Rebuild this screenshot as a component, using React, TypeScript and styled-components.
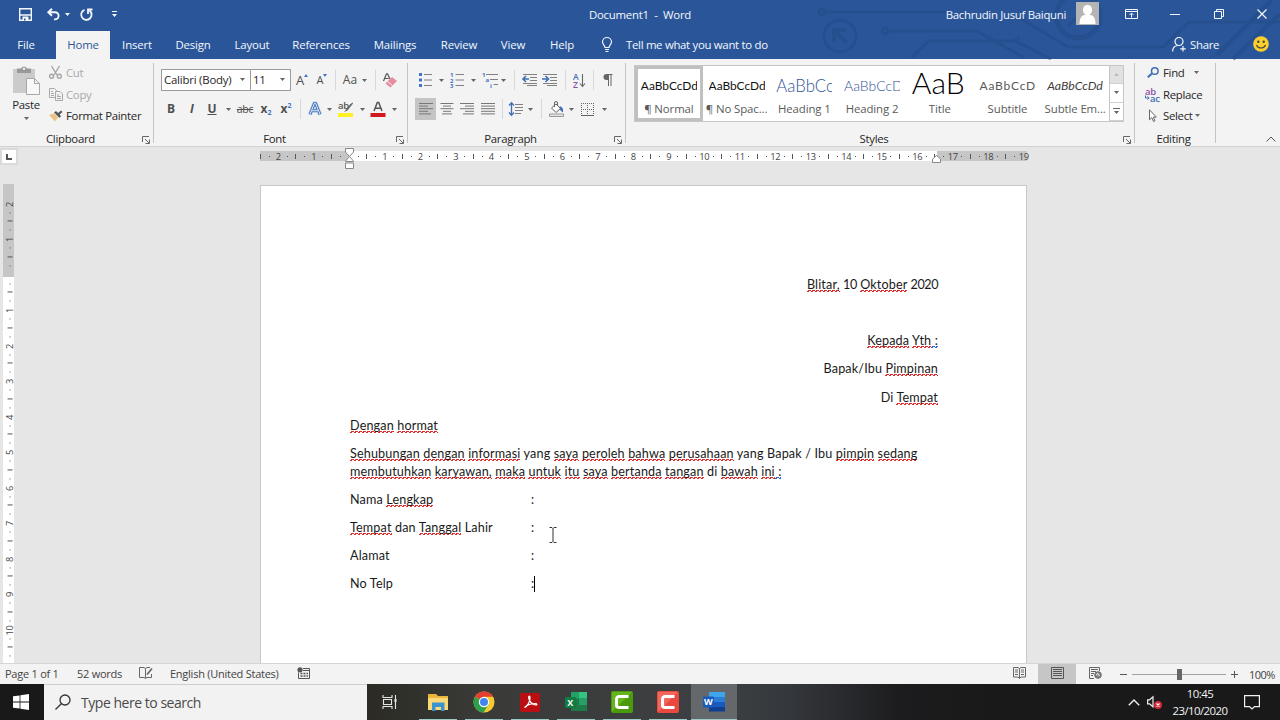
import React from 'react';
import styled, {createGlobalStyle, css} from 'styled-components';

const GlobalStyle = createGlobalStyle`
  * {
    box-sizing: border-box;
  }

  body {
    margin: 0;
    overflow: hidden;
  }

  svg {
    display: block;
    flex: none;
    overflow: visible;
  }
`;

const StyledApp = styled.main`
  display: flex;
  flex-direction: column;
  width: 1280px;
  height: 720px;
  overflow: hidden;
  background-color: #e6e6e6;
  color: #262626;
  font-family: "Open Sans", "Noto Sans", sans-serif;
  font-size: 11.4px;
  letter-spacing: -0.3px;
  white-space: pre;
`;

// Blue header

const Header = styled.header`
  position: relative;
  height: 59px;
  flex: none;
  background-color: #2a5699;
  color: #f4f7fc;
`;

const Circuit = styled.svg`
  position: absolute;
  top: 0;
  right: 0;
  opacity: 0.6;
`;

const TitleBar = styled.div`
  position: relative;
  display: grid;
  grid-template-columns: 1fr auto 1fr;
  align-items: center;
  height: 28px;
`;

const Slots = styled.div`
  display: flex;
  align-items: center;
`;

const Slot = styled.div<{ $w: number }>`
  display: flex;
  align-items: center;
  justify-content: center;
  flex: none;
  width: ${props => props.$w}px;
`;

const WindowTitle = styled.div`
  letter-spacing: -0.25px;
`;

const WindowControls = styled.div`
  display: flex;
  align-items: center;
  justify-content: flex-end;
`;

const UserName = styled.span`
  margin-right: 10px;
`;

const Avatar = styled.div`
  width: 23px;
  height: 23px;
  margin: -2px 8px 0 0;
  background-color: #b4b4b4;
`;

const TabRow = styled.nav`
  position: relative;
  display: flex;
  align-items: stretch;
  height: 31px;
  padding-top: 3px;
`;

const Tab = styled.div<{ $w: number; $active?: boolean }>`
  display: flex;
  align-items: center;
  justify-content: center;
  width: ${props => props.$w}px;
  padding-bottom: 1px;
  background-color: ${props => props.$active ? '#f3f3f3' : 'transparent'};
  color: ${props => props.$active ? '#2b579a' : '#f4f7fc'};
  letter-spacing: -0.15px;
`;

const FileTab = styled(Tab)`
  padding-right: 4px;
  padding-bottom: 2px;
`;

const TellMe = styled.div`
  display: flex;
  align-items: center;
  gap: 13px;
  margin-left: 15px;
  padding-bottom: 1px;
`;

const ShareArea = styled.div`
  display: flex;
  align-items: center;
  gap: 4px;
  margin-left: auto;
  padding: 0 11px 2px 0;
`;

const ShareText = styled.span`
  width: 28px;
  margin-right: 31px;
`;

// Ribbon

const Ribbon = styled.section`
  display: flex;
  flex: none;
  height: 88px;
  padding-top: 4px;
  background-color: #f3f3f3;
  border-bottom: 1px solid #d2d2d2;
`;

const Group = styled.div<{ $w: number }>`
  display: flex;
  flex-direction: column;
  flex: none;
  width: ${props => props.$w}px;
  height: 80px;
  border-right: 1px solid #c4c4c4;
`;

const GroupBody = styled.div`
  height: 66px;
  flex: none;
`;

const GroupFooter = styled.div`
  display: grid;
  grid-template-columns: 1fr auto;
  align-items: center;
  flex: none;
  height: 14px;
  margin-top: 2px;
  padding: 1px 3px 0 0;
  line-height: 14px;
  text-align: center;
`;

const ClipboardBody = styled(GroupBody)`
  display: flex;
`;

const PasteButton = styled.div`
  display: flex;
  flex-direction: column;
  align-items: center;
  width: 48px;
  padding: 3px 0 0 4px;
`;

const PasteLabel = styled.span`
  margin: 2px 0 5px;
  line-height: 15px;
`;

const CommandList = styled.div`
  display: flex;
  flex-direction: column;
  margin-top: -1px;
`;

const Command = styled.div<{ $disabled?: boolean }>`
  display: flex;
  align-items: center;
  gap: 3px;
  height: 21.5px;
  color: ${props => props.$disabled ? '#a9a9a9' : '#262626'};
`;

const CommandIcon = styled.div`
  display: flex;
  justify-content: center;
  width: 15px;
`;

const ToolRow = styled.div<{ $first?: boolean }>`
  display: flex;
  align-items: center;
  height: 22px;
  margin-top: ${props => props.$first ? 6 : 7}px;
  padding-left: 7px;
`;

const Combo = styled.div<{ $w: number }>`
  display: flex;
  align-items: center;
  justify-content: space-between;
  flex: none;
  width: ${props => props.$w}px;
  height: 22px;
  margin-right: -1px;
  padding: 0 5px 1px 2px;
  background-color: #fff;
  border: 1px solid #9c9c9c;
  letter-spacing: -0.2px;
`;

const Glyph = styled.span<{ $size?: number; $color?: string; $bold?: boolean; $italic?: boolean }>`
  color: ${props => props.$color || '#505050'};
  font-size: ${props => props.$size || 12}px;
  font-weight: ${props => props.$bold ? 700 : 400};
  font-style: ${props => props.$italic ? 'italic' : 'normal'};
  letter-spacing: 0;
  line-height: 16px;
`;

const Underlined = styled(Glyph)`
  text-decoration: underline;
`;

const Struck = styled(Glyph)`
  text-decoration: line-through;
  letter-spacing: -0.3px;
`;

const Small = styled.span<{ $up?: boolean }>`
  color: #4472c4;
  font-size: 7px;
  vertical-align: ${props => props.$up ? '5px' : '-2px'};
  line-height: 1px;
`;

const Divider = styled.div`
  width: 1px;
  height: 20px;
  background-color: #d8d8d8;
`;

const Pressed = styled(Slot)`
  height: 22px;
  background-color: #c5c5c5;
`;

const Gallery = styled.div`
  display: flex;
  width: 490px;
  height: 57px;
  margin: 2px 0 0 8px;
  background-color: #fff;
  border: 1px solid #c6c6c6;
  letter-spacing: -0.1px;
`;

const StyleCard = styled.div<{ $active?: boolean }>`
  display: flex;
  flex-direction: column;
  align-items: center;
  width: 67.8px;
  height: 55px;
  color: #5a5a5a;
  ${props => props.$active && css`
    box-shadow: inset 0 0 0 3px #c0c0c0;
  `}
`;

const Sample = styled.div<{ $size: number; $color: string; $light?: boolean; $italic?: boolean; $spacing?: number }>`
  width: 56px;
  height: 35px;
  overflow: hidden;
  color: ${props => props.$color};
  font-family: Lato, "Open Sans", sans-serif;
  font-size: ${props => props.$size}px;
  font-weight: ${props => props.$light ? 300 : 400};
  font-style: ${props => props.$italic ? 'italic' : 'normal'};
  letter-spacing: ${props => props.$spacing || 0}px;
  line-height: 39px;
`;

const TitleSample = styled(Sample)`
  line-height: 32px;
`;

const GalleryScroll = styled.div`
  display: flex;
  flex-direction: column;
  width: 14px;
  margin-left: auto;
`;

const ScrollButton = styled.div<{ $disabled?: boolean }>`
  display: flex;
  align-items: center;
  justify-content: center;
  flex: 1;
  background-color: ${props => props.$disabled ? '#e1e1e1' : '#fff'};
  border-left: 1px solid #c6c6c6;
  border-bottom: 1px solid #d0d0d0;
`;

const EditingBody = styled(GroupBody)`
  margin-top: -1px;
  margin-bottom: 1px;
  padding-left: 10px;
`;

const CollapseArea = styled.div`
  display: flex;
  align-items: flex-end;
  justify-content: flex-end;
  flex: 1;
  padding: 0 4px 4px 0;
`;

// Workspace

const Workspace = styled.section`
  display: flex;
  flex-direction: column;
  height: 516px;
  flex: none;
  overflow: hidden;
`;

const RulerRow = styled.div`
  display: flex;
  align-items: flex-start;
  height: 37px;
  flex: none;
  padding-top: 1px;
`;

const TabSelector = styled.div`
  display: flex;
  align-items: center;
  justify-content: center;
  width: 18px;
  height: 17px;
  background-color: #fff;
  border: 2px solid #dadada;
`;

const Ruler = styled.div`
  position: relative;
  display: flex;
  align-items: center;
  width: 767px;
  height: 10px;
  margin: 3px 0 0 242px;
  background: linear-gradient(90deg, #c6c6c6 89px, #fff 89px, #fff 677px, #c6c6c6 677px);
`;

const RulerCells = styled.div`
  display: flex;
  align-items: center;
  margin: 1px 0 0 -4px;
`;

const RulerCell = styled.div`
  display: flex;
  align-items: center;
  justify-content: center;
  width: 8.89px;
  height: 10px;
  color: #444;
  font-size: 9.3px;
  line-height: 10px;
`;

const Tick = styled.div<{ $long?: boolean }>`
  width: 1px;
  height: ${props => props.$long ? 5 : 1}px;
  background-color: #555;
`;

const Marker = styled.svg<{ $x: number; $y: number }>`
  position: absolute;
  left: ${props => props.$x}px;
  top: ${props => props.$y}px;
`;

const Canvas = styled.div`
  display: flex;
  flex: 1;
  align-items: flex-start;
`;

const SideRuler = styled.div`
  width: 11px;
  height: 479px;
  margin-left: 3px;
  padding: 15.7px 0 0 2px;
  flex: none;
  background: linear-gradient(180deg, #c6c6c6 93px, #fff 93px);
`;

const SideCell = styled(RulerCell)`
  width: 10px;
  height: 8.89px;
  transform: rotate(-90deg);
`;

const Page = styled.article`
  position: relative;
  width: 767px;
  height: 480px;
  margin: 1px 0 0 246px;
  padding: 90px 88px 0 89px;
  background-color: #fff;
  border: 1px solid #c8c8c8;
  color: #1a1a1a;
  font-family: Lato, Carlito, sans-serif;
  font-size: 12.6px;
  letter-spacing: 0.15px;
`;

const Paragraph = styled.p<{ $right?: boolean }>`
  display: flex;
  flex-direction: column;
  align-items: ${props => props.$right ? 'flex-end' : 'flex-start'};
  min-height: 18px;
  margin: 0 0 10.15px;
  line-height: 18px;
`;

const Digits = styled.span`
  letter-spacing: -0.45px;
`;

const Field = styled.div`
  display: grid;
  grid-template-columns: 181px auto;
  margin: 0 0 10.15px;
  line-height: 18px;
`;

const Wavy = styled.span<{ $grammar?: boolean }>`
  --ink: ${props => props.$grammar ? '#2f62dc' : '#e02c2c'};
  background:
    linear-gradient(90deg, var(--ink) 2px, transparent 2px) 0 100% / 4px 1px repeat-x,
    linear-gradient(90deg, transparent 1px, var(--ink) 1px) 0 calc(100% - 1px) / 4px 1px repeat-x;
`;

const Caret = styled.span`
  display: inline-block;
  width: 1px;
  height: 16px;
  background-color: #000;
  vertical-align: -4px;
`;

const Pointer = styled.svg`
  position: absolute;
  left: 288px;
  top: 341px;
`;

// Status bar

const StatusBar = styled.footer`
  display: flex;
  align-items: center;
  flex: none;
  height: 21px;
  padding: 0 0 2px 5px;
  background-color: #f3f3f3;
  border-top: 1px solid #d5d5d5;
  color: #444;
  font-size: 11px;
  letter-spacing: -0.25px;
`;

const StatusItem = styled.div<{ $w: number }>`
  width: ${props => props.$w}px;
  flex: none;
`;

const StatusRight = styled.div`
  display: flex;
  align-items: center;
  height: 20px;
  margin: 0 0 -2px auto;
  padding-right: 4px;
`;

const ViewButton = styled.div<{ $active?: boolean }>`
  display: flex;
  align-items: center;
  justify-content: center;
  width: 38px;
  height: 20px;
  padding-bottom: 2px;
  background-color: ${props => props.$active ? '#c6c6c6' : 'transparent'};
`;

const ZoomTrack = styled.div`
  display: flex;
  align-items: center;
  justify-content: center;
  width: 94px;
  height: 11px;
  background: linear-gradient(#a0a0a0, #a0a0a0) 0 5px / 100% 1px no-repeat;
`;

const ZoomThumb = styled.div`
  width: 5px;
  height: 11px;
  background-color: #666;
`;

const ZoomValue = styled.span`
  width: 27px;
  margin-left: 7px;
  letter-spacing: -0.5px;
`;

// Taskbar

const Taskbar = styled.footer`
  display: flex;
  flex: none;
  height: 36px;
  background: linear-gradient(90deg, #2b2b24 367px, #3a3a38 480px, #3d4043 720px, #34373b 790px, #1c1c1e 900px, #191919 1000px);
  color: #f2f2f2;
`;

const StartButton = styled.div`
  display: flex;
  align-items: center;
  justify-content: center;
  width: 44px;
  padding-right: 2px;
  background-color: #191919;
`;

const SearchBox = styled.div`
  display: flex;
  align-items: center;
  gap: 10px;
  width: 323px;
  padding: 0 0 1px 11px;
  background-color: #f2f2f2;
  border-top: 1px solid #cfcfcf;
  color: #4a4a4a;
  font-size: 14px;
  letter-spacing: -0.47px;
`;

const TaskViewSlot = styled(Slot)`
  padding-right: 3px;
`;

const TaskButton = styled.div<{ $running?: boolean; $active?: boolean }>`
  display: flex;
  align-items: center;
  justify-content: center;
  width: 46px;
  background-color: ${props => props.$active ? '#65686b' : 'transparent'};
  ${props => props.$running && css`
    background-image: linear-gradient(#9ccac6, #9ccac6);
    background-size: ${props.$active ? '46px 1px' : '38px 1px'};
    background-position: center bottom;
    background-repeat: no-repeat;
  `}
`;

const Tray = styled.div`
  display: flex;
  align-items: center;
  margin-left: auto;
  padding-right: 20px;
`;

const Clock = styled.div`
  width: 62px;
  margin-right: 13px;
  text-align: center;
  line-height: 17px;
  font-size: 11.4px;
  letter-spacing: -0.55px;
`;

function Arrow({color = '#666'}: { color?: string }) {
  return (
    <svg width="5" height="3" viewBox="0 0 5 3">
      <path d="M0 0h5L2.5 3z" fill={color}/>
    </svg>
  );
}

function Launcher() {
  return (
    <svg width="9" height="9" viewBox="0 0 9 9" fill="none" stroke="#666">
      <path d="M1.5 7V1.5H8M4 4l4 4M8.5 4.5v4h-4"/>
    </svg>
  );
}

type GroupProps = {
  w: number;
  label: string;
  noLauncher?: boolean;
  children: React.ReactNode;
}

function RibbonGroup({w, label, noLauncher, children}: GroupProps) {
  return (
    <Group $w={w}>
      {children}
      <GroupFooter>
        <span>{label}</span>
        {!noLauncher && <Launcher/>}
      </GroupFooter>
    </Group>
  );
}

function TextLines({rows, x = 0}: { rows: number[]; x?: number }) {
  return (
    <svg width="14" height="12" viewBox="0 0 14 12" stroke="#777" strokeWidth="1">
      {rows.map((len, i) => {
        const start = x === 0 ? 0 : x === 1 ? (14 - len) / 2 : 14 - len;
        return <path key={i} d={`M${start} ${i * 2.6 + 0.5}h${len}`}/>;
      })}
    </svg>
  );
}

function ClipboardGroup() {
  return (
    <RibbonGroup w={154} label="Clipboard">
      <ClipboardBody>
        <PasteButton>
          <svg width="27" height="29" viewBox="0 0 27 29">
            <path d="M0 3h22v24H0z" fill="#cbcbcb"/>
            <path d="M4 2.500h4a3.200 3.200 0 0 1 6 0h4V7H4z" fill="#999"/>
            <circle cx="11" cy="2.800" r="1.200" fill="#f3f3f3"/>
            <path d="M13.500 12.500h8l5 5v11h-13zM21.500 12.500v5h5" fill="#f8f8f8" stroke="#a8a8a8"/>
          </svg>
          <PasteLabel>Paste</PasteLabel>
          <Arrow/>
        </PasteButton>
        <CommandList>
          <Command $disabled>
            <CommandIcon>
              <svg width="13" height="13" viewBox="0 0 13 13" fill="none" stroke="#a5a5a5" strokeWidth="1.400">
                <path d="M2.500 0l5.500 9M10.500 0L5 9"/>
                <circle cx="2.600" cy="10.300" r="2"/>
                <circle cx="10.300" cy="10.300" r="2"/>
              </svg>
            </CommandIcon>
            Cut
          </Command>
          <Command $disabled>
            <CommandIcon>
              <svg width="14" height="13" viewBox="0 0 14 13" fill="#f3f3f3" stroke="#a9a9a9">
                <path d="M.5.5h5l2 2v7h-7zM2 3.500h2M2 5.500h3M2 7.500h3"/>
                <path d="M6.500 3.500h4.500l2.500 2.500v6.500h-7zM8 7h2M8 8.500h4M8 10.500h4"/>
              </svg>
            </CommandIcon>
            Copy
          </Command>
          <Command>
            <CommandIcon>
              <svg width="14" height="13" viewBox="0 0 14 13">
                <path d="M0 6l5-1.500L9 8.500 6 12.500z" fill="#eec183"/>
                <path d="M5 3.500l2-1.500 5 5-1.500 2z" fill="#555"/>
                <path d="M8.500 4.500l3.500-3 1.500 1.500-3.500 3z" fill="#555"/>
              </svg>
            </CommandIcon>
            Format Painter
          </Command>
        </CommandList>
      </ClipboardBody>
    </RibbonGroup>
  );
}

function FontGroup() {
  return (
    <RibbonGroup w={254} label="Font">
      <GroupBody>
        <ToolRow $first>
          <Combo $w={90}>Calibri (Body)<Arrow/></Combo>
          <Combo $w={41}>11<Arrow/></Combo>
          <Slot $w={24}>
            <Glyph $size={13}>A</Glyph>
            <svg width="4" height="12" viewBox="0 0 4 12"><path d="M0 3h4L2 0z" fill="#4472c4"/></svg>
          </Slot>
          <Slot $w={16}>
            <Glyph $size={11}>A</Glyph>
            <svg width="4" height="12" viewBox="0 0 4 12"><path d="M0 0h4L2 3z" fill="#4472c4"/></svg>
          </Slot>
          <Slot $w={10}><Divider/></Slot>
          <Slot $w={20}><Glyph>Aa</Glyph></Slot>
          <Slot $w={8}><Arrow/></Slot>
          <Slot $w={14}><Divider/></Slot>
          <Slot $w={16}>
            <svg width="14" height="15" viewBox="0 0 14 15">
              <path d="M.5 8L3.500.8h1L7 6M1.700 5.500h4" fill="none" stroke="#555" strokeWidth="1.200"/>
              <path d="M2.500 10.500L9 4l5 4-6.500 6.500z" fill="#e78b9f"/>
              <path d="M4.500 8.500l5 4" stroke="#f3f3f3"/>
            </svg>
          </Slot>
        </ToolRow>
        <ToolRow>
          <Slot $w={20}><Glyph $bold>B</Glyph></Slot>
          <Slot $w={22}><Glyph $italic $bold>I</Glyph></Slot>
          <Slot $w={18}><Underlined $bold>U</Underlined></Slot>
          <Slot $w={14}><Arrow/></Slot>
          <Slot $w={20}><Struck $size={10.5}>abc</Struck></Slot>
          <Slot $w={22}><Glyph $bold>x<Small>2</Small></Glyph></Slot>
          <Slot $w={18}><Glyph $bold>x<Small $up>2</Small></Glyph></Slot>
          <Slot $w={10}><Divider/></Slot>
          <Slot $w={20}>
            <svg width="14" height="14" viewBox="0 0 14 14" fill="none" strokeLinejoin="round">
              <path d="M2 12.500L6.300 1.500h1.400L12 12.500M4 8.800h6" stroke="#a9c3ea" strokeWidth="4"/>
              <path d="M2 12.500L6.300 1.500h1.400L12 12.500M4 8.800h6" stroke="#3f6fb5" strokeWidth="2.600"/>
              <path d="M2 12.500L6.300 1.500h1.400L12 12.500M4 8.800h6" stroke="#fff" strokeWidth="0.900"/>
            </svg>
          </Slot>
          <Slot $w={8}><Arrow/></Slot>
          <Slot $w={26}>
            <svg width="16" height="17" viewBox="0 0 16 17">
              <text x="0" y="8" fontSize="9.500" fontWeight="600" fill="#555">ab</text>
              <path d="M6 11l6-7.500 2.500-2 .5 1-5.500 7z" fill="#666"/>
              <path d="M0 12h15v4H0z" fill="#fff024"/>
            </svg>
          </Slot>
          <Slot $w={6}><Arrow/></Slot>
          <Slot $w={26}>
            <svg width="16" height="17" viewBox="0 0 16 17">
              <path d="M4 10L7.300 1.500h1.400L12 10M5.200 7.200h5.600" fill="none" stroke="#555" strokeWidth="1.500"/>
              <path d="M.5 12h15v4H.5z" fill="#d11a1f"/>
            </svg>
          </Slot>
          <Slot $w={6}><Arrow/></Slot>
        </ToolRow>
      </GroupBody>
    </RibbonGroup>
  );
}

function ParagraphGroup() {
  return (
    <RibbonGroup w={218} label="Paragraph">
      <GroupBody>
        <ToolRow $first>
          <Slot $w={20}>
            <svg width="13" height="14" viewBox="0 0 13 14">
              <path d="M0 0h3v3H0zM0 5.500h3v3H0zM0 11h3v3H0z" fill="#4472c4"/>
              <path d="M5 1.500h8M5 7h8M5 12.500h8" stroke="#808080"/>
            </svg>
          </Slot>
          <Slot $w={12}><Arrow/></Slot>
          <Slot $w={20}>
            <svg width="14" height="14" viewBox="0 0 14 14" fontSize="6" fontWeight="700" fill="#4472c4">
              <text x="0" y="4">1</text>
              <text x="0" y="9.700">2</text>
              <text x="0" y="15.400">3</text>
              <path d="M5.500 1.500H14M5.500 7H14M5.500 12.500H14" stroke="#808080"/>
            </svg>
          </Slot>
          <Slot $w={12}><Arrow/></Slot>
          <Slot $w={22}>
            <svg width="16" height="14" viewBox="0 0 16 14" fontSize="6" fontWeight="700" fill="#4472c4">
              <text x="0" y="4">1</text>
              <text x="3.500" y="9">a</text>
              <text x="8" y="14.500">i</text>
              <path d="M4 1.500h12M8 6.500h8M11.500 11.500H16" stroke="#808080"/>
            </svg>
          </Slot>
          <Slot $w={5}><Arrow/></Slot>
          <Slot $w={16}><Divider/></Slot>
          <Slot $w={15}>
            <svg width="16" height="12" viewBox="0 0 16 12" fill="none" stroke="#808080">
              <path d="M1 .5h14M8 3.500h7M8 6.500h7M1 9.500h14M5 11.500h10"/>
              <path d="M7 5H1.500M4 2L1 5l3 3" stroke="#3f6fb5" strokeWidth="1.600"/>
            </svg>
          </Slot>
          <Slot $w={25}>
            <svg width="16" height="12" viewBox="0 0 16 12" fill="none" stroke="#808080">
              <path d="M1 .5h14M8 3.500h7M8 6.500h7M1 9.500h14M5 11.500h10"/>
              <path d="M0 5h6M3.500 2l3 3-3 3" stroke="#3f6fb5" strokeWidth="1.600"/>
            </svg>
          </Slot>
          <Slot $w={6}><Divider/></Slot>
          <Slot $w={22}>
            <svg width="13" height="15" viewBox="0 0 13 15" fontSize="8.500" fontWeight="600">
              <text x="0" y="6.500" fill="#3f6fb5">A</text>
              <text x="0" y="15" fill="#8b52a8">Z</text>
              <path d="M9.500 1v12M7 10.500l2.500 3 2.500-3" fill="none" stroke="#666" strokeWidth="1.100"/>
            </svg>
          </Slot>
          <Slot $w={7}><Divider/></Slot>
          <Slot $w={22}>
            <svg width="10" height="12" viewBox="0 0 10 12">
              <path d="M4.500.5H9.500M5.500 0v12M8 0v12" stroke="#666" fill="none"/>
              <path d="M5.500 0H3.500a3 3 0 0 0 0 6h2z" fill="#666"/>
            </svg>
          </Slot>
        </ToolRow>
        <ToolRow>
          <Pressed $w={21}><TextLines rows={[14, 9, 14, 9, 12]}/></Pressed>
          <Slot $w={21}><TextLines rows={[13, 8, 13, 8, 10]} x={1}/></Slot>
          <Slot $w={20}><TextLines rows={[14, 9, 14, 9, 11]} x={2}/></Slot>
          <Slot $w={21}><TextLines rows={[14, 14, 14, 14, 14]}/></Slot>
          <Slot $w={8}><Divider/></Slot>
          <Slot $w={20}>
            <svg width="14" height="14" viewBox="0 0 14 14" fill="none">
              <path d="M2.500 1v12M0 3.500L2.500.8 5 3.500M0 10.500l2.500 2.700L5 10.500" stroke="#3f6fb5" strokeWidth="1.300"/>
              <path d="M6 2.500h8M6 5.500h8M6 8.500h8M6 11.500h6" stroke="#808080"/>
            </svg>
          </Slot>
          <Slot $w={8}><Arrow/></Slot>
          <Slot $w={14}><Divider/></Slot>
          <Slot $w={18}>
            <svg width="16" height="15" viewBox="0 0 16 15" fill="none">
              <path d="M2.500 6L7 2l4.500 4.500L7 10.500z" fill="#fafafa" stroke="#666"/>
              <path d="M5.500 5V1a1.500 1.500 0 0 1 3 0v3" stroke="#666"/>
              <path d="M10.500 4.500c3 0 4 2.500 3.500 6-1-1-2.500-1.500-3-3z" fill="#3f6fb5"/>
              <path d="M.5 12h14v2.500H.5z" fill="#e4e4e4" stroke="#999"/>
            </svg>
          </Slot>
          <Slot $w={10}><Arrow/></Slot>
          <Slot $w={24}>
            <svg width="14" height="13" viewBox="0 0 14 13" fill="none" stroke="#666">
              <path d="M0 .5h13M0 6.500h13M.5 2v10M6.500 2v10M12.500 2v10" strokeDasharray="1 1"/>
              <path d="M0 12.500h13"/>
            </svg>
          </Slot>
          <Slot $w={8}><Arrow/></Slot>
        </ToolRow>
      </GroupBody>
    </RibbonGroup>
  );
}

function StylesGroup() {
  return (
    <RibbonGroup w={509} label="Styles">
      <GroupBody>
        <Gallery>
          <StyleCard $active><Sample $size={11.9} $color="#111">AaBbCcDd</Sample>¶ Normal</StyleCard>
          <StyleCard><Sample $size={11.9} $color="#111">AaBbCcDd</Sample>¶ No Spac...</StyleCard>
          <StyleCard><Sample $size={16.8} $color="#2f5496" $light>AaBbCc</Sample>Heading 1</StyleCard>
          <StyleCard><Sample $size={14} $color="#2f5496" $light>AaBbCcD</Sample>Heading 2</StyleCard>
          <StyleCard><TitleSample $size={30} $color="#000" $light>AaB</TitleSample>Title</StyleCard>
          <StyleCard><Sample $size={12} $color="#5a5a5a" $spacing={0.8}>AaBbCcD</Sample>Subtitle</StyleCard>
          <StyleCard><Sample $size={12.3} $color="#404040" $italic>AaBbCcDd</Sample>Subtle Em...</StyleCard>
          <GalleryScroll>
            <ScrollButton $disabled>
              <svg width="5" height="3" viewBox="0 0 5 3"><path d="M0 3h5L2.500 0z" fill="#bbb"/></svg>
            </ScrollButton>
            <ScrollButton><Arrow/></ScrollButton>
            <ScrollButton>
              <svg width="7" height="6" viewBox="0 0 7 6"><path d="M0 0h7v1H0zM1 3h5L3.500 6z" fill="#666"/></svg>
            </ScrollButton>
          </GalleryScroll>
        </Gallery>
      </GroupBody>
    </RibbonGroup>
  );
}

function EditingGroup() {
  return (
    <RibbonGroup w={81} label="Editing" noLauncher>
      <EditingBody>
        <Command>
          <CommandIcon>
            <svg width="12" height="11" viewBox="0 0 12 11" fill="none" stroke="#3f6fb5">
              <circle cx="7.800" cy="4" r="3.300" strokeWidth="1.500"/>
              <path d="M5 6.500L.8 10.300" strokeWidth="2.200"/>
            </svg>
          </CommandIcon>
          <Slots>Find<Slot $w={24}><Arrow/></Slot></Slots>
        </Command>
        <Command>
          <CommandIcon>
            <svg width="15" height="15" viewBox="0 0 15 15" fontSize="9.500" fontWeight="600">
              <text x="0" y="7.500" fill="#8b52a8">ab</text>
              <text x="5" y="14.500" fill="#3f6fb5">ac</text>
              <path d="M.5 8.500V11H4M2.500 9.500L4.200 11l-1.700 1.500" fill="none" stroke="#3f6fb5"/>
            </svg>
          </CommandIcon>
          Replace
        </Command>
        <Command>
          <CommandIcon>
            <svg width="8" height="13" viewBox="0 0 8 13">
              <path d="M.5.8v10l2.300-2.200 1.700 3.900 1.500-.7-1.700-3.700h3z" fill="#fff" stroke="#666"/>
            </svg>
          </CommandIcon>
          <Slots>Select<Slot $w={10}><Arrow/></Slot></Slots>
        </Command>
      </EditingBody>
    </RibbonGroup>
  );
}

function tickFor(quarter: number) {
  if (quarter === 0) return null;
  if (quarter % 4 === 0) return Math.abs(quarter / 4);
  return <Tick $long={quarter % 2 === 0}/>;
}

function range(from: number, to: number) {
  return Array.from({length: to - from + 1}, (_, i) => from + i);
}

const recipient = [
  <><Wavy>Blitar,</Wavy> <Digits>10</Digits> <Wavy>Oktober</Wavy> <Digits>2020</Digits></>,
  null,
  <><Wavy>Kepada</Wavy> <Wavy>Yth</Wavy><Wavy $grammar> :</Wavy></>,
  <>Bapak/Ibu <Wavy>Pimpinan</Wavy></>,
  <>Di <Wavy>Tempat</Wavy></>,
];

function words(text: string) {
  // a leading underscore marks a word that passed the spell check
  return text.split(' ').map((word, i) => (
    <React.Fragment key={i}>
      {i > 0 && ' '}
      {word.startsWith('_') ? word.slice(1) : <Wavy>{word}</Wavy>}
    </React.Fragment>
  ));
}

function DocumentPage() {
  return (
    <Page>
      {recipient.map((line, i) => <Paragraph key={i} $right><span>{line}</span></Paragraph>)}
      <Paragraph><span>{words('Dengan hormat')}</span></Paragraph>
      <Paragraph>
        <span>{words('Sehubungan dengan informasi _yang saya peroleh bahwa perusahaan _yang _Bapak _/ _Ibu pimpin sedang')}</span>
        <span>{words('membutuhkan karyawan, maka untuk itu saya bertanda tangan _di bawah ini')}<Wavy $grammar> :</Wavy></span>
      </Paragraph>
      <Field><span>Nama <Wavy>Lengkap</Wavy></span><span>:</span></Field>
      <Field><span><Wavy>Tempat</Wavy> dan <Wavy>Tanggal</Wavy> Lahir</span><span>:</span></Field>
      <Field><span>Alamat</span><span>:</span></Field>
      <Field><span>No Telp</span><span>:<Caret/></span></Field>
      <Pointer width="8" height="16" viewBox="0 0 8 16" fill="none" stroke="#333">
        <path d="M.5.5h2.500l1 1 1-1h2.500M4 1.500v13M.5 15.500h2.500l1-1 1 1h2.500"/>
      </Pointer>
    </Page>
  );
}

function HeaderArea() {
  return (
    <Header>
      <Circuit width="500" height="59" viewBox="0 0 500 59" fill="none" stroke="#234b88" strokeWidth="3">
        <circle cx="42" cy="12" r="3"/>
        <path d="M46 12h120"/>
        <circle cx="60" cy="36" r="16"/>
        <path d="M54 42V30h12M54 30l13 13" strokeWidth="4"/>
        <circle cx="105" cy="31" r="3"/>
        <path d="M109 31h88l46 26M132 57l17-16h85l6-4M236 41l35 18M238 17l50 30h95l26-25h91"/>
        <circle cx="298" cy="16" r="22" strokeWidth="5"/>
        <path d="M288 26l16-16"/>
        <path d="M437 55l55-55M453 59l47-45" strokeWidth="4"/>
      </Circuit>
      <TitleBar>
        <Slots>
          <Slot $w={51}>
            <svg width="13" height="13" viewBox="0 0 13 13" fill="none" stroke="#f4f7fc" strokeWidth="1.400">
              <path d="M.7.7h11.600v11.600H.7zM.7 7h11.600"/>
              <path d="M3.500 8.500h6v4h-6z" fill="#f4f7fc" stroke="none"/>
              <path d="M5 10.500h1.500v2H5z" fill="#2a5699" stroke="none"/>
            </svg>
          </Slot>
          <Slot $w={4}>
            <svg width="13" height="12" viewBox="0 0 13 12" fill="none" stroke="#f4f7fc" strokeWidth="1.900">
              <path d="M5 .5L1.300 4 5 7.500M1.500 4H8a3.600 3.600 0 0 1 0 7.200H7" transform="translate(0 .2)"/>
            </svg>
          </Slot>
          <Slot $w={24}><Arrow color="#f4f7fc"/></Slot>
          <Slot $w={15}>
            <svg width="13" height="13" viewBox="0 0 13 13" fill="none" stroke="#f4f7fc" strokeWidth="1.800">
              <path d="M4.500 1.800A5.200 5.200 0 1 0 9.500 2.500M8 6V1.500h4.500"/>
            </svg>
          </Slot>
          <Slot $w={40}>
            <svg width="5" height="6" viewBox="0 0 5 6" fill="#f4f7fc"><path d="M0 0h5v1H0zM0 3h5L2.500 6z"/></svg>
          </Slot>
        </Slots>
        <WindowTitle>Document1  -  Word</WindowTitle>
        <WindowControls>
          <UserName>Bachrudin Jusuf Baiquni</UserName>
          <Avatar>
            <svg width="23" height="23" viewBox="0 0 23 23" fill="#fff">
              <ellipse cx="11.500" cy="8" rx="4.600" ry="5.200"/>
              <path d="M3.500 22c0-6 2-8.500 5-9h6c3 .5 5 3 5 9z"/>
            </svg>
          </Avatar>
          <Slot $w={49}>
            <svg width="13" height="10" viewBox="0 0 13 10" fill="none" stroke="#f4f7fc">
              <path d="M.5.5h12v9H.5zM.5 2.500h12M6.500 8.500V4.500M4.500 6l2-2 2 2"/>
            </svg>
          </Slot>
          <Slot $w={38}>
            <svg width="10" height="1" viewBox="0 0 10 1"><path d="M0 0h10v1H0z" fill="#f4f7fc"/></svg>
          </Slot>
          <Slot $w={49}>
            <svg width="10" height="10" viewBox="0 0 10 10" fill="none" stroke="#f4f7fc">
              <path d="M.5 2.500h7v7h-7zM2.500 2.500v-2h7v7h-2"/>
            </svg>
          </Slot>
          <Slot $w={37}>
            <svg width="10" height="10" viewBox="0 0 10 10" stroke="#f4f7fc" strokeWidth="1.200">
              <path d="M.5.500l9 9M9.500.500l-9 9"/>
            </svg>
          </Slot>
        </WindowControls>
      </TitleBar>
      <TabRow>
        <FileTab $w={56}>File</FileTab>
        <Tab $w={54} $active>Home</Tab>
        <Tab $w={54}>Insert</Tab>
        <Tab $w={58}>Design</Tab>
        <Tab $w={60}>Layout</Tab>
        <Tab $w={78}>References</Tab>
        <Tab $w={70}>Mailings</Tab>
        <Tab $w={58}>Review</Tab>
        <Tab $w={50}>View</Tab>
        <Tab $w={48}>Help</Tab>
        <TellMe>
          <svg width="12" height="15" viewBox="0 0 12 15" fill="none" stroke="#f4f7fc" strokeWidth="1.200">
            <path d="M4 10.500C4 8.500 1.500 7.500 1.500 5a4.500 4.500 0 0 1 9 0c0 2.500-2.500 3.500-2.500 5.500zM4 12.500h4M4.500 14.500h3"/>
          </svg>
          Tell me what you want to do
        </TellMe>
        <ShareArea>
          <svg width="14" height="15" viewBox="0 0 14 15" fill="none" stroke="#f4f7fc" strokeWidth="1.200">
            <circle cx="7" cy="4.500" r="4"/>
            <path d="M.6 14.500c0-3.500 2-5.500 5-6M11 9v5.500M8.200 11.800h5.600"/>
          </svg>
          <ShareText>Share</ShareText>
          <svg width="16" height="16" viewBox="0 0 16 16">
            <circle cx="8" cy="8" r="7.800" fill="#fbd02c"/>
            <circle cx="5.300" cy="5.800" r="1.200" fill="#444"/>
            <circle cx="10.700" cy="5.800" r="1.200" fill="#444"/>
            <path d="M3.500 9c1.500 4 7.500 4 9 0" fill="none" stroke="#444" strokeWidth="1.200"/>
          </svg>
        </ShareArea>
      </TabRow>
    </Header>
  );
}

function WordStatus() {
  return (
    <StatusBar>
      <StatusItem $w={72}>Page 1 of 1</StatusItem>
      <StatusItem $w={62}>52 words</StatusItem>
      <StatusItem $w={31}>
        <svg width="14" height="12" viewBox="0 0 14 12" fill="none" stroke="#666">
          <path d="M6.500 11V1.500L5 .5H.5v10H5l1.500 1 1.500-1h4.500V7M6.500 1.500L8 .5h3"/>
          <path d="M8 7.500L13 1.500" strokeWidth="1.700"/>
        </svg>
      </StatusItem>
      <StatusItem $w={127}>English (United States)</StatusItem>
      <svg width="13" height="12" viewBox="0 0 13 12" fill="none" stroke="#555">
        <path d="M6 1.500h6.500v10h-11V5.500M6 3.500h6"/>
        <circle cx="3" cy="2.800" r="2.600" fill="#555" stroke="none"/>
        <path d="M3.500 6.500h7.500M3.500 9h7.500" strokeWidth="1.500" strokeDasharray="2 1"/>
      </svg>
      <StatusRight>
        <ViewButton>
          <svg width="13" height="12" viewBox="0 0 13 12" fill="none" stroke="#666">
            <path d="M6.500 11.500V1.500L5 .5H.5v9.500H5l1.500 1.500L8 10h4.500V.5H8L6.500 1.500M2 3h3M2 5h3M2 7.500h3M8 3h3M8 5h3M8 7.500h3"/>
          </svg>
        </ViewButton>
        <ViewButton $active>
          <svg width="13" height="12" viewBox="0 0 13 12" fill="none" stroke="#555">
            <path d="M.5.5h12v11H.5zM2 2.500h9M2 4.500h9M2 6.500h9M2 8.500h9"/>
          </svg>
        </ViewButton>
        <ViewButton>
          <svg width="13" height="12" viewBox="0 0 13 12" fill="none" stroke="#666">
            <path d="M5 11.500H.5V.5h10V4M2 2.500h7M2 4.500h5M2 6.500h3M2 8.500h2"/>
            <circle cx="9" cy="8" r="3.300" fill="#888"/>
            <path d="M7 8l2-1.500L10.500 9" stroke="#eee"/>
          </svg>
        </ViewButton>
        <Slot $w={18}>
          <svg width="7" height="1" viewBox="0 0 7 1"><path d="M0 0h7v1H0z" fill="#555"/></svg>
        </Slot>
        <ZoomTrack><ZoomThumb/></ZoomTrack>
        <Slot $w={16}>
          <svg width="7" height="7" viewBox="0 0 7 7"><path d="M0 3h7v1H0zM3 0h1v7H3z" fill="#555"/></svg>
        </Slot>
        <ZoomValue>100%</ZoomValue>
      </StatusRight>
    </StatusBar>
  );
}

function CamtasiaIcon({light, dark}: { light: string; dark: string }) {
  return (
    <svg width="22" height="22" viewBox="0 0 22 22">
      <rect width="22" height="22" rx="2" fill={dark}/>
      <path d="M1 1h20L1 21z" fill={light}/>
      <path d="M17.500 5.500H8a2.500 2.500 0 0 0-2.500 2.500v6A2.500 2.500 0 0 0 8 16.500h9.500" fill="none" stroke="#fff" strokeWidth="3"/>
    </svg>
  );
}

function WindowsTaskbar() {
  return (
    <Taskbar>
      <StartButton>
        <svg width="16" height="16" viewBox="0 0 16 16" fill="#fff">
          <path d="M0 2.300l6.600-.9v6.200H0zM7.400 1.300L16 0v7.600H7.400zM0 8.400h6.600v6.200L0 13.700zM7.400 8.400H16V16l-8.600-1.300z"/>
        </svg>
      </StartButton>
      <SearchBox>
        <svg width="16" height="16" viewBox="0 0 16 16" fill="none" stroke="#333" strokeWidth="1.300">
          <circle cx="10" cy="6" r="5"/>
          <path d="M6.300 9.700L.5 15.500"/>
        </svg>
        Type here to search
      </SearchBox>
      <TaskViewSlot $w={48}>
        <svg width="16" height="14" viewBox="0 0 16 14" fill="none" stroke="#e6e6e6" strokeWidth="1.100">
          <path d="M1 0v2.500h9V0M1.500 4.500h8v5h-8zM1 14v-2.500h9V14M13.500 0v14"/>
          <path d="M12.500 4h2v3h-2z" fill="#e6e6e6" stroke="none"/>
        </svg>
      </TaskViewSlot>
      <TaskButton $running>
        <svg width="20" height="18" viewBox="0 0 20 18">
          <path d="M0 1h8l2 2h10v14H0z" fill="#e9b53c"/>
          <path d="M0 5h20v12H0z" fill="#fbd877"/>
          <path d="M4 18V9.500h12.500V18H13v-4H7.500v4z" fill="#3c94cf"/>
        </svg>
      </TaskButton>
      <TaskButton $running>
        <svg width="22" height="22" viewBox="0 0 22 22">
          <circle cx="11" cy="11" r="10.500" fill="#f6ca2c"/>
          <path d="M11 11L1.900 5.750A10.500 10.500 0 0 1 20.100 5.750H11z" fill="#e0402f"/>
          <path d="M11 11L1.900 5.750A10.500 10.500 0 0 0 10.500 21.500L15.500 13.600z" fill="#2da04c"/>
          <circle cx="11" cy="11" r="5.200" fill="#fff"/>
          <circle cx="11" cy="11" r="4" fill="#4484f0"/>
        </svg>
      </TaskButton>
      <TaskButton $running>
        <svg width="20" height="19" viewBox="0 0 20 19">
          <rect width="20" height="19" rx="1.500" fill="#b90f12"/>
          <path d="M4.500 14.500c3-1 6-6.500 5.500-10.500-.3-1.500-1.800-.8-1.300 1C9.500 8.500 12.500 11.500 16 12c1.300 0 1-1.500-.5-1.500-4 0-8.500 1.500-11 4z" fill="none" stroke="#fff" strokeWidth="1.200"/>
        </svg>
      </TaskButton>
      <TaskButton $running>
        <svg width="22" height="20" viewBox="0 0 22 20">
          <path d="M6 0h16v19H6z" fill="#1f7a49"/>
          <path d="M14 0h8v6.500h-8z" fill="#35c481"/>
          <path d="M6 0h8v6.500H6z" fill="#21a366"/>
          <path d="M14 6.500h8V13h-8z" fill="#27a065"/>
          <rect y="5" width="11" height="11" rx="1" fill="#107c41"/>
          <text x="2.300" y="13.700" fontSize="9" fontWeight="700" fill="#fff">X</text>
        </svg>
      </TaskButton>
      <TaskButton $running><CamtasiaIcon light="#65b61d" dark="#4b9a0c"/></TaskButton>
      <TaskButton $running><CamtasiaIcon light="#f4675c" dark="#e9493e"/></TaskButton>
      <TaskButton $running $active>
        <svg width="22" height="20" viewBox="0 0 22 20">
          <path d="M6 0h16v5H6z" fill="#41a5ee"/>
          <path d="M6 5h16v5H6z" fill="#2b7cd3"/>
          <path d="M6 10h16v5H6z" fill="#185abd"/>
          <path d="M6 15h16v4.500H6z" fill="#103f91"/>
          <rect y="4.500" width="11" height="11" rx="1" fill="#185abd"/>
          <text x=".9" y="13.300" fontSize="9" fontWeight="700" fill="#fff">W</text>
        </svg>
      </TaskButton>
      <Tray>
        <svg width="12" height="7" viewBox="0 0 12 7" fill="none" stroke="#eee" strokeWidth="1.400">
          <path d="M.8 6.200L6 1l5.200 5.200"/>
        </svg>
        <Slot $w={29}>
          <svg width="15" height="13" viewBox="0 0 15 13" fill="none" stroke="#eee" strokeWidth="1.200">
            <path d="M.6 3.800h2L6 .8v10l-3.400-3h-2z"/>
            <circle cx="11" cy="9" r="4" fill="#d2283a" stroke="none"/>
            <path d="M9.500 7.500l3 3M12.500 7.500l-3 3" stroke="#fff"/>
          </svg>
        </Slot>
        <Clock>10:45{'\n'}23/10/2020</Clock>
        <svg width="16" height="15" viewBox="0 0 16 15" fill="none" stroke="#f2f2f2" strokeWidth="1.200">
          <path d="M.6.6h14.800v11H10.500L8 14l-2.500-2.400H.6z"/>
        </svg>
      </Tray>
    </Taskbar>
  );
}

export function App() {
  return (
    <StyledApp>
      <GlobalStyle/>
      <HeaderArea/>
      <Ribbon>
        <ClipboardGroup/>
        <FontGroup/>
        <ParagraphGroup/>
        <StylesGroup/>
        <EditingGroup/>
        <CollapseArea>
          <svg width="10" height="6" viewBox="0 0 10 6" fill="none" stroke="#555">
            <path d="M.5 5.500L5 1l4.500 4.500"/>
          </svg>
        </CollapseArea>
      </Ribbon>
      <Workspace>
        <RulerRow>
          <TabSelector>
            <svg width="6" height="6" viewBox="0 0 6 6"><path d="M1 0v5h5" fill="none" stroke="#555" strokeWidth="2"/></svg>
          </TabSelector>
          <Ruler>
            <RulerCells>
              {range(-10, 76).map(q => <RulerCell key={q}>{tickFor(q)}</RulerCell>)}
            </RulerCells>
            <Marker $x={85} $y={-3} width="9" height="21" viewBox="0 0 9 21" fill="#fff" stroke="#888">
              <path d="M.5.5h8V4l-4 4.500L.5 4zM.5 13.500V13l4-4.500 4 4.500v.5zM.5 15h8v5.500h-8z"/>
            </Marker>
            <Marker $x={672} $y={4} width="9" height="8" viewBox="0 0 9 8" fill="#fff" stroke="#888">
              <path d="M.5 7.500V4l4-3.500 4 3.500v3.500z"/>
            </Marker>
          </Ruler>
        </RulerRow>
        <Canvas>
          <SideRuler>
            {range(-8, 43).map(q => <SideCell key={q}>{tickFor(q)}</SideCell>)}
          </SideRuler>
          <DocumentPage/>
        </Canvas>
      </Workspace>
      <WordStatus/>
      <WindowsTaskbar/>
    </StyledApp>
  );
}

export default App;
